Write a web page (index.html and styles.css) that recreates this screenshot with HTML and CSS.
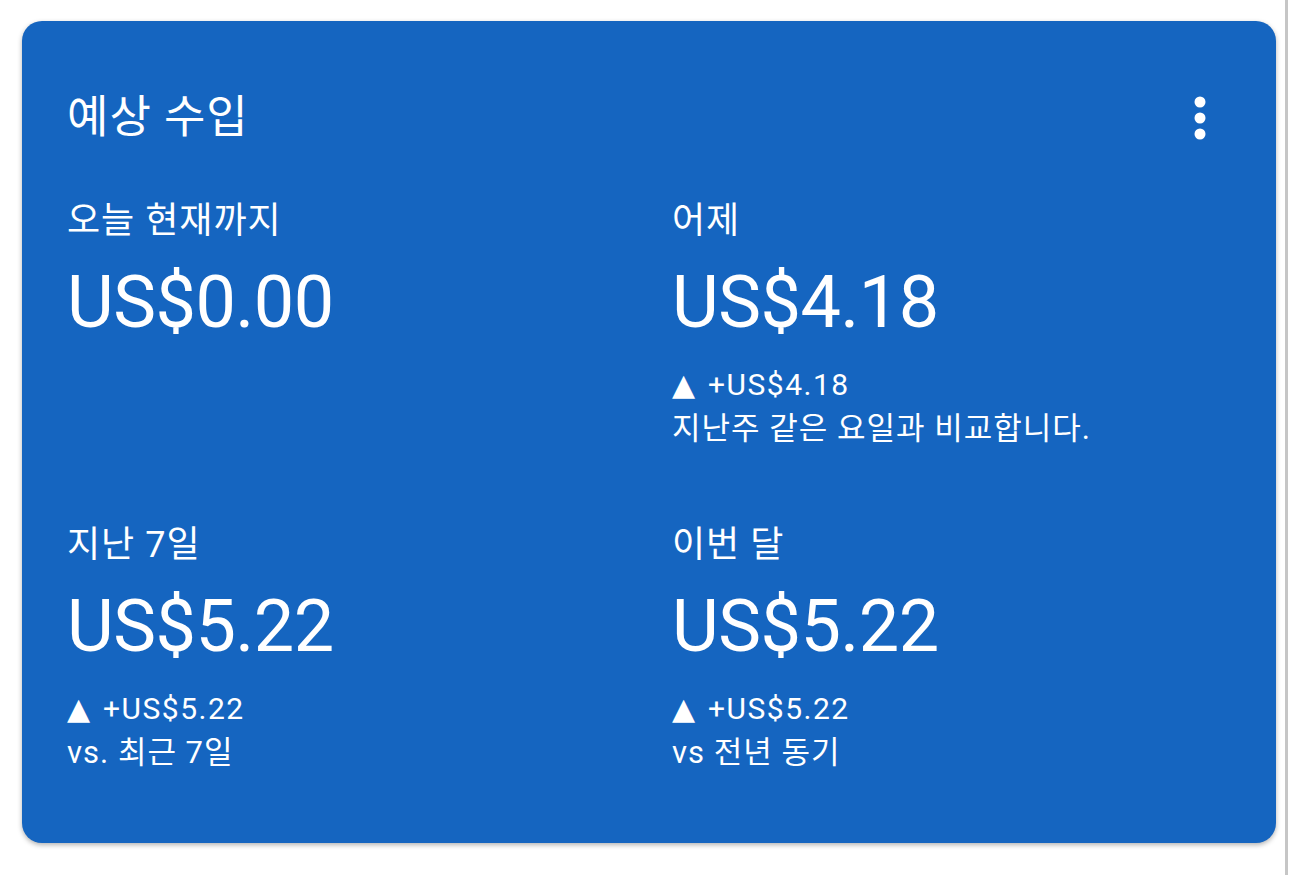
FILE: index.html
```html
<!DOCTYPE html>
<html lang="ko">
<head>
    <meta charset="UTF-8">
    <meta name="viewport" content="width=device-width, initial-scale=1.0">
    <title>예상 수입</title>
    <link rel="stylesheet" href="styles.css">
</head>
<body>
    <div class="page">
        <div class="card">
            <div class="card-header">
                <h1>예상 수입</h1>
                <svg class="more" width="12" height="48" viewBox="0 0 12 48" aria-label="더보기">
                    <circle cx="6" cy="9" r="5.5" fill="#fff"/>
                    <circle cx="6" cy="25" r="5.5" fill="#fff"/>
                    <circle cx="6" cy="41" r="5.5" fill="#fff"/>
                </svg>
            </div>

            <!-- 수입 요약 -->
            <div class="stats">
                <div class="stat">
                    <div class="label">오늘 현재까지</div>
                    <div class="amount">US$0.00</div>
                </div>
                <div class="stat">
                    <div class="label">어제</div>
                    <div class="amount">US$4.18</div>
                    <div class="change"><span class="up">▲</span> +US$4.18</div>
                    <div class="note">지난주 같은 요일과 비교합니다.</div>
                </div>
                <div class="stat">
                    <div class="label">지난 7일</div>
                    <div class="amount">US$5.22</div>
                    <div class="change"><span class="up">▲</span> +US$5.22</div>
                    <div class="note">vs. 최근 7일</div>
                </div>
                <div class="stat">
                    <div class="label">이번 달</div>
                    <div class="amount">US$5.22</div>
                    <div class="change"><span class="up">▲</span> +US$5.22</div>
                    <div class="note">vs 전년 동기</div>
                </div>
            </div>
        </div>
        <div class="edge"></div>
    </div>
</body>
</html>
```

FILE: styles.css
```css
body {
    margin: 0;
    background: #fff;
    font-family: Roboto, "Noto Sans CJK KR", sans-serif;
    color: #fff;
}
.page {
    display: flex;
    align-items: flex-start;
    height: 875px;
    overflow: hidden;
}
.card {
    box-sizing: border-box;
    width: 1254px;
    height: 822px;
    margin: 21px 0 0 22px;
    padding: 73px 70px 0 45px;
    background: #1565c0;
    border-radius: 20px;
    box-shadow: 0 2px 5px rgba(0,0,0,0.3);
}
.edge {
    width: 3px;
    height: 875px;
    margin-left: 9px;
    background: #c6c6c6;
}
.card-header {
    display: flex;
    justify-content: space-between;
    align-items: flex-start;
}
.card-header h1 {
    margin: 0;
    font-size: 45px;
    line-height: 48px;
    font-weight: 400;
    letter-spacing: 1px;
}
.more {
    display: block;
    margin-top: -1px;
}
.stats {
    display: grid;
    grid-template-columns: 605px 1fr;
    row-gap: 74px;
    margin-top: 59px;
}
.label {
    font-size: 36px;
    line-height: 40px;
    letter-spacing: 1px;
}
.amount {
    margin-top: 22px;
    font-size: 72px;
    line-height: 80px;
    letter-spacing: -0.5px;
}
.change {
    margin-top: 20px;
    font-size: 30px;
    line-height: 44px;
    letter-spacing: 1.5px;
}
.change .up {
    font-family: "DejaVu Sans", sans-serif;
    font-size: 30px;
    letter-spacing: 0;
    margin-right: 4px;
}
.note {
    font-size: 31px;
    line-height: 44px;
    letter-spacing: 1px;
}
```
